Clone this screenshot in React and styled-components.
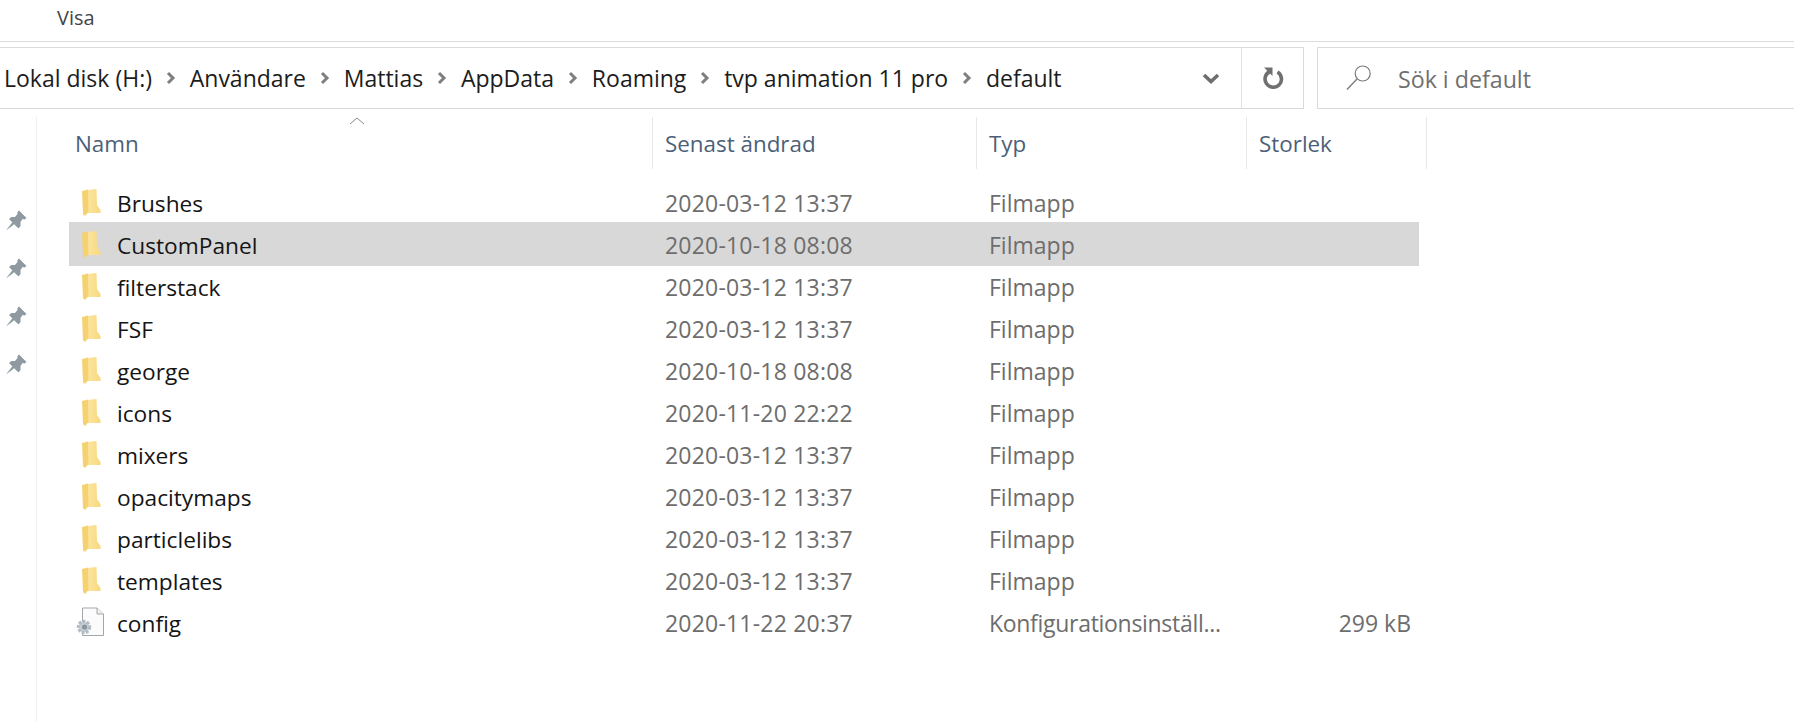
import React from "react";
import styled, { createGlobalStyle } from "styled-components";

const GlobalStyle = createGlobalStyle`
  html, body {
    margin: 0;
    background: #ffffff;
    overflow: hidden;
  }
  body {
    font-family: "Open Sans", "Noto Sans", sans-serif;
  }
`;

const crumbs = [
  "Lokal disk (H:)",
  "Användare",
  "Mattias",
  "AppData",
  "Roaming",
  "tvp animation 11 pro",
  "default",
];

const files = [
  { name: "Brushes", date: "2020-03-12 13:37", type: "Filmapp" },
  { name: "CustomPanel", date: "2020-10-18 08:08", type: "Filmapp", selected: true },
  { name: "filterstack", date: "2020-03-12 13:37", type: "Filmapp" },
  { name: "FSF", date: "2020-03-12 13:37", type: "Filmapp" },
  { name: "george", date: "2020-10-18 08:08", type: "Filmapp" },
  { name: "icons", date: "2020-11-20 22:22", type: "Filmapp" },
  { name: "mixers", date: "2020-03-12 13:37", type: "Filmapp" },
  { name: "opacitymaps", date: "2020-03-12 13:37", type: "Filmapp" },
  { name: "particlelibs", date: "2020-03-12 13:37", type: "Filmapp" },
  { name: "templates", date: "2020-03-12 13:37", type: "Filmapp" },
  { name: "config", date: "2020-11-22 20:37", type: "Konfigurationsinställ...", size: "299 kB", isFile: true },
];

function FolderIcon() {
  return (
    <svg width="20" height="28" viewBox="0 0 20 28">
      <defs>
        <linearGradient id="folderFill" x1="0" y1="0" x2="1" y2="0">
          <stop offset="0" stopColor="#fbe5a0" />
          <stop offset="1" stopColor="#f8d97e" />
        </linearGradient>
      </defs>
      <path d="M6 2 L15.5 1 L16 17 L19.5 22 L19.5 25 L6 25 Z" fill="url(#folderFill)" />
      <path d="M1 3 L7 1.5 L7.5 24 L4 28 L2 26 Z" fill="#f5d271" />
    </svg>
  );
}

function ConfigIcon() {
  return (
    <svg width="28" height="30" viewBox="0 0 28 30">
      <path d="M6.5 1 H21 L27.5 7 V28.5 H6.5 Z" fill="#fbfbfb" stroke="#a3a7ab" />
      <path d="M21 1 V7 H27.5" fill="#eef0f2" stroke="#a3a7ab" />
      <circle cx="8" cy="20" r="5.5" fill="#c9d0d7" stroke="#b4bbc3" strokeWidth="3.4" strokeDasharray="2.6 1.4" />
      <circle cx="8.5" cy="20" r="2.6" fill="#8a949f" />
    </svg>
  );
}

function PinIcon() {
  return (
    <svg width="22" height="22" viewBox="0 0 22 22">
      <path d="M14 1.5 L21.5 9 L19.5 10.5 L17.5 10 L15.5 13 L15.5 17 L13.5 19.5 L4 10 L6.5 8 L10 8 L12.5 5 L12.5 3 Z" fill="#8e9aa0" />
      <path d="M7.5 13 L1 21.5 L9.5 15 Z" fill="#8e9aa0" />
    </svg>
  );
}

function Chevron() {
  return (
    <svg width="10" height="14" viewBox="0 0 10 14">
      <path d="M2 2 L7 7 L2 12" fill="none" stroke="#7f7f7f" strokeWidth="3" />
    </svg>
  );
}

function DropChevron() {
  return (
    <svg width="18" height="12" viewBox="0 0 18 12">
      <path d="M2 3 L9 9.5 L16 3" fill="none" stroke="#6e6e6e" strokeWidth="3.6" />
    </svg>
  );
}

function RefreshIcon() {
  return (
    <svg width="24" height="24" viewBox="0 0 24 24">
      <path d="M9 5.5 A8.2 8.2 0 1 0 16.5 6" fill="none" stroke="#707070" strokeWidth="3.6" />
      <path d="M3 1.5 H11.5 V10 Z" fill="#707070" />
    </svg>
  );
}

function SearchIcon() {
  return (
    <svg width="26" height="26" viewBox="0 0 26 26">
      <circle cx="16.7" cy="8.5" r="7.5" fill="none" stroke="#7b7b7b" strokeWidth="1.2" />
      <path d="M11 14 L1 24.5" fill="none" stroke="#7b7b7b" strokeWidth="1.4" />
    </svg>
  );
}

export default function App() {
  return (
    <Page>
      <GlobalStyle />
      <MenuBar>
        <MenuItem>Visa</MenuItem>
      </MenuBar>
      <NavRow>
        <AddressBar>
          <Crumbs>
            {crumbs.map((crumb, index) => (
              <React.Fragment key={crumb}>
                {index > 0 && <Chevron />}
                <Crumb>{crumb}</Crumb>
              </React.Fragment>
            ))}
          </Crumbs>
          <DropButton>
            <DropChevron />
          </DropButton>
          <RefreshButton>
            <RefreshIcon />
          </RefreshButton>
        </AddressBar>
        <SearchBox>
          <SearchIcon />
          <SearchText>Sök i default</SearchText>
        </SearchBox>
      </NavRow>
      <Body>
        <PinPane>
          <PinIcon />
          <PinIcon />
          <PinIcon />
          <PinIcon />
        </PinPane>
        <ListPane>
          <HeaderRow>
            <HeaderCell>
              Namn
              <SortArrow width="16" height="8" viewBox="0 0 16 8">
                <path d="M1 7 L8 1 L15 7" fill="none" stroke="#8a8a8a" />
              </SortArrow>
            </HeaderCell>
            <HeaderCell>Senast ändrad</HeaderCell>
            <HeaderCell>Typ</HeaderCell>
            <HeaderCell>Storlek</HeaderCell>
          </HeaderRow>
          <Rows>
            {files.map((file) => (
              <Row key={file.name} $selected={file.selected}>
                <NameCell>
                  <IconSlot $file={file.isFile}>
                    {file.isFile ? <ConfigIcon /> : <FolderIcon />}
                  </IconSlot>
                  {file.name}
                </NameCell>
                <DateCell>{file.date}</DateCell>
                <TypeCell $long={file.isFile}>{file.type}</TypeCell>
                <SizeCell>{file.size}</SizeCell>
              </Row>
            ))}
          </Rows>
        </ListPane>
      </Body>
    </Page>
  );
}

const Page = styled.div`
  width: 1794px;
  height: 722px;
  overflow: hidden;
  background: #ffffff;
`;

const MenuBar = styled.div`
  height: 41px;
  display: flex;
  align-items: center;
  padding-left: 57px;
  border-bottom: 1px solid #dcdcdc;
`;

const MenuItem = styled.span`
  font-size: 20px;
  color: #444444;
  position: relative;
  top: -3px;
`;

const NavRow = styled.div`
  display: flex;
  margin-top: 5px;
  height: 62px;
  gap: 13px;
`;

const AddressBar = styled.div`
  width: 1304px;
  box-sizing: border-box;
  display: flex;
  align-items: center;
  border: 1px solid #d9d9d9;
  border-left: none;
`;

const Crumbs = styled.div`
  flex: 1;
  display: flex;
  align-items: center;
  gap: 13.9px;
  padding-left: 4px;
`;

const Crumb = styled.span`
  font-size: 23px;
  color: #1c1c1c;
  white-space: nowrap;
`;

const DropButton = styled.div`
  width: 61px;
  display: flex;
  justify-content: center;
`;

const RefreshButton = styled.div`
  width: 61px;
  align-self: stretch;
  display: flex;
  align-items: center;
  justify-content: center;
  border-left: 1px solid #e0e0e0;
`;

const SearchBox = styled.div`
  flex: 1;
  box-sizing: border-box;
  display: flex;
  align-items: center;
  gap: 26px;
  padding-left: 28px;
  border: 1px solid #d9d9d9;
  border-right: none;
`;

const SearchText = styled.span`
  font-size: 23.2px;
  color: #707070;
  position: relative;
  top: 1px;
`;

const Body = styled.div`
  display: flex;
  padding-top: 8px;
  height: 606px;
`;

const PinPane = styled.div`
  width: 37px;
  box-sizing: border-box;
  border-right: 1px solid #f0f0f0;
  display: flex;
  flex-direction: column;
  gap: 26px;
  padding: 92px 0 0 5px;
`;

const ListPane = styled.div`
  padding-left: 32px;
`;

const HeaderRow = styled.div`
  display: grid;
  grid-template-columns: 584px 324px 270px 180px;
  height: 52px;
`;

const HeaderCell = styled.div`
  position: relative;
  display: flex;
  align-items: center;
  padding-left: 6px;
  font-size: 22.4px;
  color: #4c5f78;
  border-right: 1px solid #e8e8e8;

  & + & {
    padding-left: 12px;
  }
`;

const SortArrow = styled.svg`
  position: absolute;
  left: 280px;
  top: 0;
`;

const Rows = styled.div`
  margin-top: 12px;
  width: 1350px;
`;

const Row = styled.div`
  display: grid;
  grid-template-columns: 584px 324px 270px 172px;
  box-sizing: border-box;
  padding-top: 2px;
  height: ${(p) => (p.$selected ? "44px" : "42px")};
  margin: ${(p) => (p.$selected ? "-1px 0" : "0")};
  align-items: center;
  background: ${(p) => (p.$selected ? "#d8d8d8" : "transparent")};
`;

const NameCell = styled.div`
  display: flex;
  align-items: center;
  padding-left: 12px;
  font-size: 22.7px;
  color: #141414;
`;

const IconSlot = styled.span`
  display: flex;
  align-items: center;
  margin-left: ${(p) => (p.$file ? "-5px" : "0")};
  width: ${(p) => (p.$file ? "41px" : "36px")};

  svg {
    margin-top: -2px;
  }
`;

const DateCell = styled.div`
  padding-left: 12px;
  font-size: 23px;
  letter-spacing: 0.2px;
  color: #6d6d6d;
  white-space: nowrap;
`;

const TypeCell = styled.div`
  padding-left: 12px;
  font-size: 23px;
  letter-spacing: ${(p) => (p.$long ? "-0.3px" : "0")};
  color: #6d6d6d;
  white-space: nowrap;
`;

const SizeCell = styled.div`
  text-align: right;
  padding-right: 8px;
  font-size: 23px;
  color: #6d6d6d;
`;
